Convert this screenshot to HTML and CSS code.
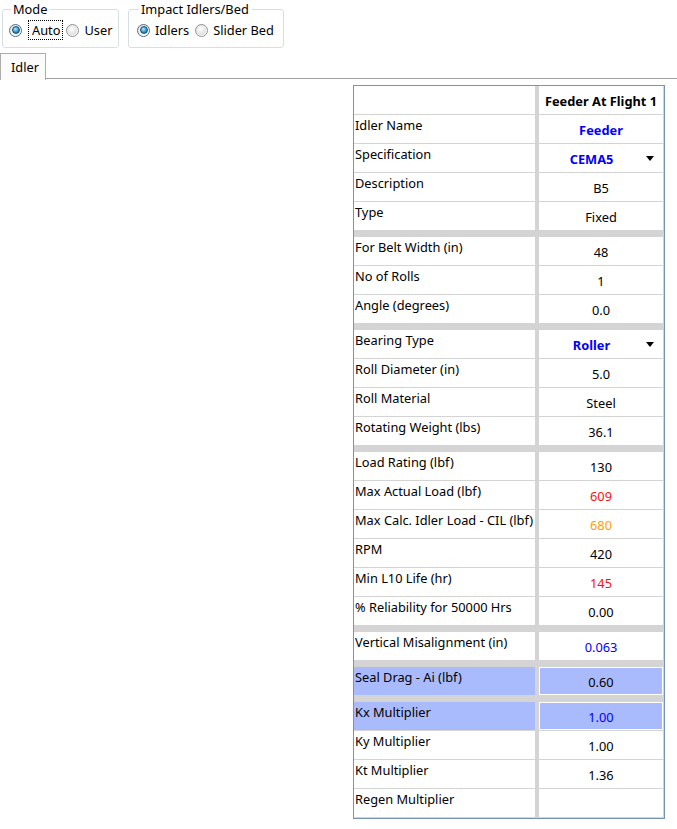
FILE: index.html
```html
<!DOCTYPE html>
<html>
<head>
<meta charset="utf-8">
<link rel="stylesheet" href="styles.css">
</head>
<body>
<div class="top">
  <fieldset class="group mode">
    <legend>Mode</legend>
    <div class="radios">
      <span class="radio checked"><span class="dot"></span></span><span class="rlabel focus">Auto</span>
      <span class="radio"><span class="dot"></span></span><span class="rlabel">User</span>
    </div>
  </fieldset>
  <fieldset class="group impact">
    <legend>Impact Idlers/Bed</legend>
    <div class="radios">
      <span class="radio checked"><span class="dot"></span></span><span class="rlabel">Idlers</span>
      <span class="radio"><span class="dot"></span></span><span class="rlabel">Slider Bed</span>
    </div>
  </fieldset>
</div>
<div class="tabs">
  <div class="tab">Idler</div>
  <div class="tabline"></div>
</div>
<div class="content">
  <div class="grid">
    <div class="row"><div class="lc"></div><div class="rc head">Feeder At Flight 1</div></div>
    <div class="row"><div class="lc">Idler Name</div><div class="rc bold blue">Feeder</div></div>
    <div class="row"><div class="lc">Specification</div><div class="rc drop bold blue"><span>CEMA5</span><i class="arrow"></i></div></div>
    <div class="row"><div class="lc">Description</div><div class="rc">B5</div></div>
    <div class="row band"><div class="lc">Type</div><div class="rc">Fixed</div></div>
    <div class="row"><div class="lc">For Belt Width (in)</div><div class="rc">48</div></div>
    <div class="row"><div class="lc">No of Rolls</div><div class="rc">1</div></div>
    <div class="row band"><div class="lc">Angle (degrees)</div><div class="rc">0.0</div></div>
    <div class="row"><div class="lc">Bearing Type</div><div class="rc drop bold blue"><span>Roller</span><i class="arrow"></i></div></div>
    <div class="row"><div class="lc">Roll Diameter (in)</div><div class="rc">5.0</div></div>
    <div class="row"><div class="lc">Roll Material</div><div class="rc">Steel</div></div>
    <div class="row band"><div class="lc">Rotating Weight (lbs)</div><div class="rc">36.1</div></div>
    <div class="row"><div class="lc">Load Rating (lbf)</div><div class="rc">130</div></div>
    <div class="row"><div class="lc">Max Actual Load (lbf)</div><div class="rc red">609</div></div>
    <div class="row"><div class="lc">Max Calc. Idler Load - CIL (lbf)</div><div class="rc orange">680</div></div>
    <div class="row"><div class="lc">RPM</div><div class="rc">420</div></div>
    <div class="row"><div class="lc">Min L10 Life (hr)</div><div class="rc red">145</div></div>
    <div class="row band"><div class="lc">% Reliability for 50000 Hrs</div><div class="rc">0.00</div></div>
    <div class="row band"><div class="lc">Vertical Misalignment (in)</div><div class="rc blue">0.063</div></div>
    <div class="row band sel"><div class="lc">Seal Drag - Ai (lbf)</div><div class="rc">0.60</div></div>
    <div class="row sel"><div class="lc">Kx Multiplier</div><div class="rc blue">1.00</div></div>
    <div class="row"><div class="lc">Ky Multiplier</div><div class="rc">1.00</div></div>
    <div class="row"><div class="lc">Kt Multiplier</div><div class="rc">1.36</div></div>
    <div class="row last"><div class="lc">Regen Multiplier</div><div class="rc"></div></div>
  </div>
</div>
</body>
</html>
```
FILE: styles.css
```css
html, body {
  margin: 0;
  padding: 0;
  background: #ffffff;
}
body {
  font-family: "Noto Sans", "Open Sans", sans-serif;
  font-size: 12.8px;
  color: #000000;
  width: 677px;
  height: 829px;
  overflow: hidden;
}
.top {
  display: flex;
  align-items: flex-start;
  gap: 9px;
  padding: 2px 0 0 2px;
  height: 51px;
  box-sizing: border-box;
}
.group {
  margin: 0;
  border: 1px solid #d5dfe5;
  border-radius: 3px;
  padding: 4px 2px 8px 6px;
  height: 46px;
  box-sizing: border-box;
  min-width: 0;
}
.group legend {
  padding: 0 3px 0 2px;
  margin-left: 2px;
  line-height: 15px;
  color: #000;
}
.mode { width: 117px; }
.impact { width: 156px; padding-left: 8px; }
.radios {
  display: flex;
  align-items: center;
  height: 18px;
  white-space: nowrap;
}
.radio {
  width: 13px;
  height: 13px;
  box-sizing: border-box;
  border-radius: 50%;
  border: 1px solid #8f8f8f;
  background: linear-gradient(135deg, #e2e2e2, #ffffff 75%);
  display: flex;
  align-items: center;
  justify-content: center;
  flex: none;
}
.radio .dot {
  width: 9px;
  height: 9px;
  border-radius: 50%;
  background: radial-gradient(circle at 40% 35%, #ffffff, #d8d8d8 85%);
}
.radio.checked {
  border-color: #5a6a78;
}
.radio.checked .dot {
  width: 8px;
  height: 8px;
  box-sizing: border-box;
  border: 1px solid #1b4d74;
  background: radial-gradient(circle at 40% 35%, #b5ecff, #2f95d2 55%, #0d5188);
}
.rlabel {
  margin: 0 5px 0 4px;
  line-height: 16px;
  padding: 0 1px;
}
.rlabel.focus {
  outline: 1px dotted #000;
  outline-offset: 1px;
  margin-left: 8px;
  margin-right: 5px;
  padding: 0 1px 0 2px;
}
.tabs {
  display: flex;
  align-items: flex-end;
  height: 29px;
}
.tab {
  width: 46px;
  height: 27px;
  flex: none;
  box-sizing: border-box;
  border: 1px solid #acacac;
  border-bottom: none;
  background: #fbfbfb;
  padding: 5px 0 0 10px;
  line-height: 16px;
}
.tabline {
  flex: 1;
  height: 1px;
  background: #a0a0a0;
  margin-bottom: 1px;
}
.content {
  padding: 5px 0 0 353px;
}
.grid {
  width: 312px;
  box-sizing: border-box;
  border: 1px solid #7795b5;
  background: #d4d4d4;
  padding: 0 1px 1px 0;
  display: flex;
  flex-direction: column;
  gap: 1px;
}
.row {
  display: grid;
  grid-template-columns: 181px 124px;
  column-gap: 4px;
  height: 28px;
}
.row.band {
  margin-bottom: 6px;
}
.lc {
  background: #ffffff;
  padding: 2px 0 0 1px;
  line-height: 16px;
  white-space: nowrap;
  overflow: hidden;
}
.rc {
  background: #ffffff;
  text-align: center;
  padding-top: 6px;
  line-height: 16px;
  box-sizing: border-box;
  border: 1px solid #ffffff;
  white-space: nowrap;
}
.rc.head {
  font-weight: bold;
  padding-top: 6px;
}
.bold { font-weight: bold; }
.blue { color: #0000ff; }
.red { color: #ff1010; }
.orange { color: #ffa000; }
.drop {
  display: flex;
  align-items: flex-start;
  justify-content: space-between;
  padding-left: 0;
  padding-right: 8px;
}
.drop span {
  flex: 1;
  text-align: center;
}
.arrow {
  width: 0;
  height: 0;
  margin-top: 5px;
  margin-left: 3px;
  border-left: 4px solid transparent;
  border-right: 4px solid transparent;
  border-top: 5px solid #000;
}
.sel .lc, .sel .rc {
  background: #aabbfd;
}
```
